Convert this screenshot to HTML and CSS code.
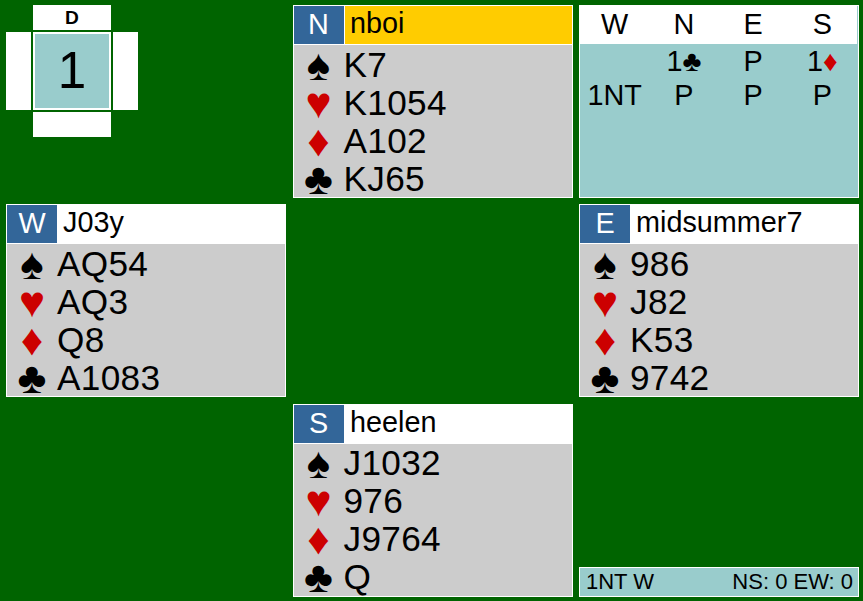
FILE: index.html
```html
<!DOCTYPE html>
<html lang="en">
<head>
  <meta charset="UTF-8" />
  <title>Bridge table</title>
  <link rel="stylesheet" href="styles.css">
</head>
<body>
  <div class="table">
    <div class="board">
      <div class="side top">D</div>
      <div class="side left"></div>
      <div class="board-num">1</div>
      <div class="side right"></div>
      <div class="side bottom"></div>
    </div>

    <div class="hand center">
      <div class="hand-head">
        <div class="seat">N</div>
        <div class="player on-turn">nboi</div>
      </div>
      <div class="suits">
        <div class="suit"><span class="sym">♠</span><span>K7</span></div>
        <div class="suit"><span class="sym red">♥</span><span>K1054</span></div>
        <div class="suit"><span class="sym red">♦</span><span>A102</span></div>
        <div class="suit"><span class="sym">♣</span><span>KJ65</span></div>
      </div>
    </div>

    <div class="auction">
      <div class="bids-head">
        <div>W</div><div>N</div><div>E</div><div>S</div>
      </div>
      <div class="bids">
        <div></div><div>1<span>♣</span></div><div>P</div><div>1<span class="red">♦</span></div>
        <div>1NT</div><div>P</div><div>P</div><div>P</div>
      </div>
    </div>

    <div class="hand">
      <div class="hand-head">
        <div class="seat">W</div>
        <div class="player">J03y</div>
      </div>
      <div class="suits">
        <div class="suit"><span class="sym">♠</span><span>AQ54</span></div>
        <div class="suit"><span class="sym red">♥</span><span>AQ3</span></div>
        <div class="suit"><span class="sym red">♦</span><span>Q8</span></div>
        <div class="suit"><span class="sym">♣</span><span>A1083</span></div>
      </div>
    </div>

    <div class="middle"></div>

    <div class="hand">
      <div class="hand-head">
        <div class="seat">E</div>
        <div class="player">midsummer7</div>
      </div>
      <div class="suits">
        <div class="suit"><span class="sym">♠</span><span>986</span></div>
        <div class="suit"><span class="sym red">♥</span><span>J82</span></div>
        <div class="suit"><span class="sym red">♦</span><span>K53</span></div>
        <div class="suit"><span class="sym">♣</span><span>9742</span></div>
      </div>
    </div>

    <div class="middle"></div>

    <div class="hand center">
      <div class="hand-head">
        <div class="seat">S</div>
        <div class="player">heelen</div>
      </div>
      <div class="suits">
        <div class="suit"><span class="sym">♠</span><span>J1032</span></div>
        <div class="suit"><span class="sym red">♥</span><span>976</span></div>
        <div class="suit"><span class="sym red">♦</span><span>J9764</span></div>
        <div class="suit"><span class="sym">♣</span><span>Q</span></div>
      </div>
    </div>

    <div class="info">
      <div class="score">
        <span>1NT W</span>
        <span>NS: 0 EW: 0</span>
      </div>
    </div>
  </div>
</body>
</html>
```

FILE: styles.css
```css
* {
  box-sizing: border-box;
}

body {
  margin: 0;
  height: 601px;
  overflow: hidden;
  background: #006400;
  font-family: "Liberation Sans", sans-serif;
  color: #000;
}

.table {
  display: grid;
  grid-template-columns: 280px 280px 280px;
  grid-template-rows: repeat(3, 193px);
  column-gap: 6.5px;
  row-gap: 6.4px;
  padding: 5px 0 0 6px;
}

.board {
  display: grid;
  grid-template-columns: 25px 78px 25px;
  grid-template-rows: 25px 78px 25px;
  gap: 2px;
  width: 132px;
  height: 132px;
  align-self: start;
}

.side {
  background: #fff;
}

.top {
  grid-column: 2;
  grid-row: 1;
  font-size: 19.2px;
  font-weight: 700;
  line-height: 25px;
  text-align: center;
}

.left {
  grid-column: 1;
  grid-row: 2;
}

.board-num {
  grid-column: 2;
  grid-row: 2;
  background: #99cccc;
  border: 2px solid #fff;
  font-size: 51.2px;
  line-height: 74px;
  text-align: center;
}

.right {
  grid-column: 3;
  grid-row: 2;
}

.bottom {
  grid-column: 2;
  grid-row: 3;
}

.hand {
  display: flex;
  flex-direction: column;
  background: #cccccc;
  border: 1px solid #fff;
}

.center .player {
  padding-left: 5.5px;
}

.hand-head {
  flex: none;
  display: flex;
  height: 39px;
  background: #fff;
  border-bottom: 1px solid #fff;
}

.seat {
  width: 50px;
  background: #336699;
  color: #fff;
  font-size: 28.8px;
  line-height: 36px;
  text-align: center;
}

.player {
  flex: 1;
  margin-left: 1px;
  padding-left: 5px;
  font-size: 28.8px;
  line-height: 35px;
}

.on-turn {
  background: #ffcc00;
}

.suits {
  padding-top: 0.6px;
}

.suit {
  display: flex;
  height: 38px;
  font-size: 35.2px;
  letter-spacing: 0.3px;
  line-height: 38px;
}

.sym {
  width: 50px;
  font-size: 44px;
  letter-spacing: 0;
  text-align: center;
}

.red {
  color: #cc0000;
}

.auction {
  display: flex;
  flex-direction: column;
  background: #99cccc;
  border: 1px solid #fff;
}

.bids-head,
.bids {
  display: grid;
  grid-template-columns: repeat(4, 1fr);
  margin-right: 1px;
  text-align: center;
  font-size: 28.8px;
}

.bids-head {
  height: 38px;
  line-height: 36px;
  background: #fff;
}

.bids {
  grid-auto-rows: 34px;
  line-height: 34px;
}

.info {
  display: flex;
  align-items: flex-end;
}

.score {
  flex: 1;
  display: flex;
  justify-content: space-between;
  height: 30px;
  padding: 0 5px 0 6px;
  background: #99cccc;
  border: 1px solid #fff;
  font-size: 22px;
  line-height: 28px;
}
```
